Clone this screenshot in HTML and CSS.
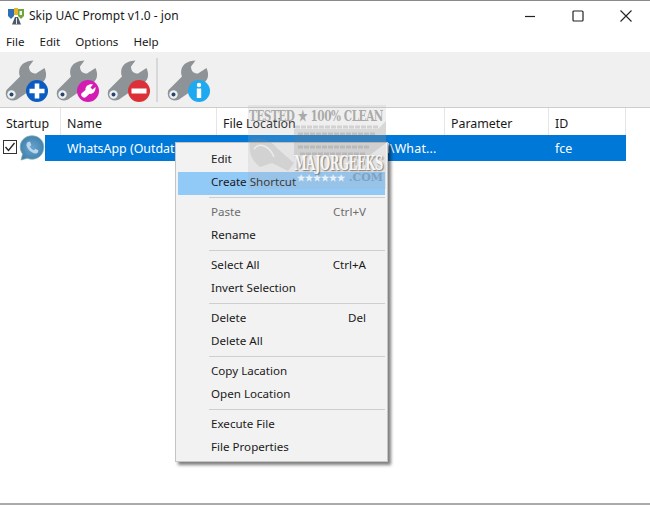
FILE: index.html
```html
<!DOCTYPE html>
<html lang="en">
<head>
<meta charset="utf-8">
<title>Skip UAC Prompt v1.0 - jon</title>
<link rel="stylesheet" href="styles.css">
</head>
<body>
<svg class="defs" width="0" height="0" aria-hidden="true">
  <radialGradient id="waFill" cx=".5" cy=".5" r=".55">
    <stop offset="0" stop-color="#6aa3cd"/>
    <stop offset="1" stop-color="#3f80ae"/>
  </radialGradient>
  <symbol id="wrench" viewBox="0 0 44 44">
    <path fill="#8e9398" d="M1.5 32 L15 18.5 C12.5 11 16 3 28.5 2.5 L24 8.5 C24 13 26.5 15.5 31 15.5 L39.5 10 C42.5 17 41.5 23 34.5 26 L12 41.5 C8 43.5 3.5 42.5 1.5 39 C0.5 37 0.5 34 1.5 32 Z"/>
    <circle cx="6.5" cy="36.5" r="4.2" fill="#eef0f2"/>
    <circle cx="6.5" cy="36.5" r="2" fill="#26466e"/>
  </symbol>
</svg>

<header class="titlebar">
  <svg class="appicon" width="18" height="18" viewBox="0 0 18 18">
    <path fill="#4d5a66" d="M5 17.5 L8 10 H11 L14 17.5 Z"/>
    <path fill="#2f6fb7" d="M1 2 H7 V9 L4 12 L1 9 Z"/>
    <path fill="#e3b52c" d="M7 1 H11 V8 H7 Z"/>
    <path fill="#6fa63a" d="M11 2 H17 V9 L14 12 L11 9 Z"/>
    <path fill="#e2e6e8" d="M9 11 H10 V17 H9 Z"/>
    <path fill="#f2f2f2" d="M12.5 4 H15 V8 H12.5 Z"/>
  </svg>
  <span class="title">Skip UAC Prompt v1.0 - jon</span>
  <div class="winctl">
    <svg width="12" height="12" viewBox="0 0 12 12"><path stroke="#222" stroke-width="1.2" d="M1 6.5 H11"/></svg>
    <svg width="12" height="12" viewBox="0 0 12 12"><rect x="1" y="1" width="10" height="10" rx="1" fill="none" stroke="#222" stroke-width="1.2"/></svg>
    <svg width="12" height="12" viewBox="0 0 12 12"><path stroke="#222" stroke-width="1.1" d="M.5 .5 L11.5 11.5 M11.5 .5 L.5 11.5"/></svg>
  </div>
</header>

<nav class="menubar">
  <span>File</span><span>Edit</span><span>Options</span><span>Help</span>
</nav>

<div class="toolbar">
  <svg class="tool" viewBox="0 0 44 44" width="44" height="44">
    <use href="#wrench"/>
    <circle cx="32" cy="33" r="11" fill="#0b5cc0"/>
    <path fill="#fff" d="M29.7 25.5 H34.3 V30.7 H39.5 V35.3 H34.3 V40.5 H29.7 V35.3 H24.5 V30.7 H29.7 Z"/>
  </svg>
  <svg class="tool" viewBox="0 0 44 44" width="44" height="44">
    <use href="#wrench"/>
    <circle cx="32" cy="33" r="11" fill="#d41cb4"/>
    <path fill="#fff" d="M26 38.5 C24.5 37 25 35.5 26.5 34.5 L29.5 32 C29 28 33 25.5 37 26.5 L34.5 29.5 L36.5 31.5 L39.5 29 C40 33 37 36.5 33.5 35.8 L30 39 C28.5 40 27 39.8 26 38.5 Z"/>
  </svg>
  <svg class="tool" viewBox="0 0 44 44" width="44" height="44">
    <use href="#wrench"/>
    <circle cx="32" cy="33" r="11" fill="#dc3038"/>
    <rect x="24.5" y="30.5" width="15" height="5" fill="#fff"/>
  </svg>
  <span class="toolsep"></span>
  <svg class="tool" viewBox="0 0 44 44" width="44" height="44">
    <use href="#wrench"/>
    <circle cx="32" cy="33" r="11" fill="#1fa9f0"/>
    <circle cx="32" cy="27" r="2.2" fill="#fff"/>
    <rect x="29.8" y="30.5" width="4.4" height="9.5" fill="#fff"/>
  </svg>
</div>

<main class="list">
  <div class="cols head">
    <div class="hcell">Startup</div>
    <div class="hcell">Name</div>
    <div class="hcell">File Location</div>
    <div class="hcell">Parameter</div>
    <div class="hcell">ID</div>
  </div>
  <div class="row">
    <div class="rowlead">
      <svg class="check" width="14" height="14" viewBox="0 0 14 14">
        <rect x=".5" y=".5" width="13" height="13" fill="#fff" stroke="#333"/>
        <path d="M2.5 7 L5.5 10.5 L11.5 3" fill="none" stroke="#222" stroke-width="1.3"/>
      </svg>
      <svg class="wa" width="26" height="26" viewBox="0 0 26 26">
        <path fill="url(#waFill)" stroke="#7fb0a8" stroke-width=".8" d="M13 .8 C6.2 .8 1.2 5.7 1.2 12 C1.2 14.8 2.2 17.2 3.6 19 L2 25 L8.2 23.2 C9.8 23.8 11.4 24.2 13 24.2 C19.8 24.2 24.8 19 24.8 12 C24.8 5.7 19.8 .8 13 .8 Z"/>
        <path fill="#b9d6ea" d="M9 7 L11 6.6 L12.4 10 L11 11.4 C11.8 13.2 13 14.4 14.8 15.2 L16.2 13.8 L19.4 15.2 L19 17.2 C17.8 18.8 15.6 18.8 13.4 17.6 C10.6 16.2 8.8 14.2 7.8 11.6 C7 9.6 7.6 8 9 7 Z"/>
      </svg>
    </div>
    <div class="cols selected">
      <div class="cell first">WhatsApp (Outdated)</div>
      <div class="cell path">C:\Users\jon\AppData\Local\What...</div>
      <div class="cell"></div>
      <div class="cell">fce</div>
    </div>
  </div>
</main>

<div class="ctx">
  <div class="item">Edit</div>
  <div class="item hot">Create Shortcut</div>
  <div class="sep"></div>
  <div class="item off"><span>Paste</span><span>Ctrl+V</span></div>
  <div class="item">Rename</div>
  <div class="sep"></div>
  <div class="item"><span>Select All</span><span>Ctrl+A</span></div>
  <div class="item">Invert Selection</div>
  <div class="sep"></div>
  <div class="item"><span>Delete</span><span>Del</span></div>
  <div class="item">Delete All</div>
  <div class="sep"></div>
  <div class="item">Copy Lacation</div>
  <div class="item">Open Location</div>
  <div class="sep"></div>
  <div class="item">Execute File</div>
  <div class="item">File Properties</div>
</div>

<div class="watermark" aria-hidden="true">
  <svg class="wmart" width="138" height="84" viewBox="0 0 138 84">
    <path fill="#8a8a8a" fill-opacity=".2" d="M2 36 C10 30 22 34 30 44 L46 58 L40 66 L24 58 L12 62 C4 56 0 46 2 36 Z"/>
    <path fill="none" stroke="#fff" stroke-opacity=".55" stroke-width="1.5" d="M6 44 C12 36 22 42 26 52"/>
    <path fill="#7d7d7d" fill-opacity=".2" d="M46 24 H130 L138 16 V38 L122 50 H46 Z"/>
    <path stroke="#6e6e6e" stroke-opacity=".22" stroke-width="3" stroke-dasharray="5 1" d="M47 22 H130 M50 29 H128 M50 42 H122 M52 49 H118"/>
  </svg>
  <div class="wm1">TESTED ★ 100% CLEAN</div>
  <div class="wm2">MAJORGEEKS</div>
  <div class="wm3"><span>★★★★★★</span><span class="wmcom">.COM</span></div>
</div>
</body>
</html>
```
FILE: styles.css
```css
* { box-sizing: border-box; }
html, body { margin: 0; padding: 0; }
body {
  position: relative;
  width: 650px;
  height: 505px;
  overflow: hidden;
  background: #fff;
  color: #1a1a1a;
  font: 11.6px/16px "Noto Sans", "Open Sans", sans-serif;
  border-top: 1px solid #8a8a8a;
  border-bottom: 2px solid #aaa;
}
.defs { position: absolute; }
.titlebar {
  display: flex;
  align-items: center;
  height: 29px;
  padding-left: 7px;
}
.appicon { margin-right: 4px; }
.title { font-size: 12px; }
.winctl {
  margin-left: auto;
  display: flex;
  gap: 36px;
  padding-right: 18px;
}
.menubar {
  display: flex;
  gap: 15px;
  height: 22px;
  padding: 4px 0 0 6px;
}
.toolbar {
  display: flex;
  align-items: center;
  height: 56px;
  padding-left: 5px;
  background: #f0f0f0;
  border-bottom: 1px solid #cfcdca;
}
.tool { margin-right: 7px; }
.toolsep {
  width: 2px;
  height: 44px;
  margin: 0 9px 0 -2px;
  background: #d6d8da;
}
.cols {
  display: grid;
}
.head {
  grid-template-columns: 61px 156px 228px 104px 77px;
  width: 626px;
  height: 27px;
}
.hcell {
  padding: 8px 0 0 6px;
  border-right: 1px solid #e5e5e5;
  font-size: 12.4px;
}
.row { display: flex; height: 26px; }
.rowlead {
  display: flex;
  width: 45px;
  padding: 5px 0 0 3px;
}
.check { flex: none; }
.wa { flex: none; margin: -5px 0 0 2px; }
.selected {
  grid-template-columns: 172px 228px 104px 77px;
  width: 581px;
  background: #0078d7;
  color: #fff;
  font-size: 12.4px;
}
.cell { padding: 6px 0 0 6px; white-space: nowrap; overflow: hidden; }
.cell.first { padding-left: 22px; }
.cell.path { letter-spacing: .2px; }
.ctx {
  position: absolute;
  left: 175px;
  top: 141px;
  width: 213px;
  height: 320px;
  padding: 6px 2px 0;
  background: #f2f2f2;
  border: 1px solid #c4c4c4;
  box-shadow: 3px 3px 3px rgba(0, 0, 0, .5);
}
.item {
  display: flex;
  justify-content: space-between;
  height: 23px;
  padding: 2px 19px 0 33px;
}
.hot { background: #91c9f7; }
.off { color: #6d6d6d; }
.sep {
  height: 1px;
  margin: 2px 0 4px 31px;
  background: #cfcfcf;
}
.watermark {
  position: absolute;
  left: 248px;
  top: 104px;
  width: 138px;
  height: 84px;
  display: flex;
  flex-direction: column;
  align-items: flex-end;
  padding: 3px 3px 0 0;
  background: rgba(175, 175, 175, .2);
  font-family: "DejaVu Serif", "Liberation Serif", serif;
  font-weight: 700;
  pointer-events: none;
}
.wmart { position: absolute; left: 0; top: 0; }
.wm1 {
  position: relative;
  font-size: 10.5px;
  line-height: 14px;
  white-space: nowrap;
  letter-spacing: -.45px;
  color: rgba(110, 110, 110, .55);
  transform: scaleY(1.4);
}
.wm2 {
  position: relative;
  margin-top: 33px;
  font-size: 11.6px;
  line-height: 16px;
  letter-spacing: -.4px;
  color: #f6f6f6;
  text-shadow: 1px 1px 1px rgba(70, 70, 70, .7);
  white-space: nowrap;
  transform: scaleY(1.7);
}
.wm3 {
  position: relative;
  display: flex;
  justify-content: space-between;
  width: 86px;
  margin-top: 1px;
  font-size: 9px;
  line-height: 12px;
  color: rgba(255, 255, 255, .8);
}
.wmcom { color: rgba(120, 150, 175, .75); font-size: 11px; }
```
